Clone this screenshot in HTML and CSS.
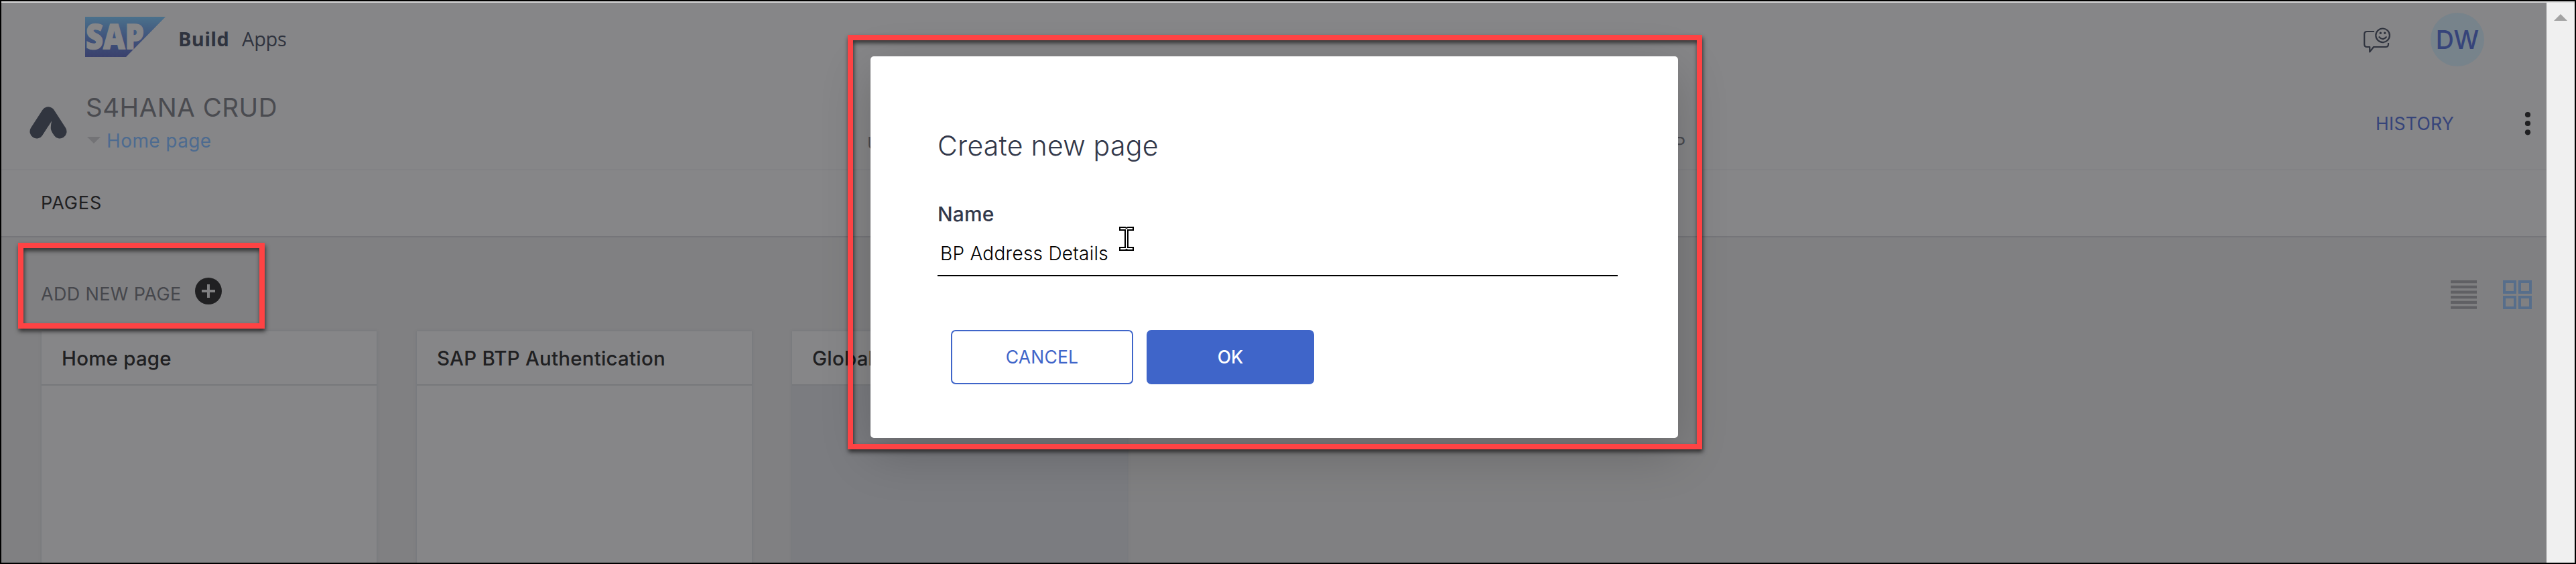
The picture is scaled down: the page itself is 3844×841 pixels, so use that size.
FILE: index.html
```
<!DOCTYPE html>
<html lang="en">
<head>
<meta charset="utf-8">
<title>SAP Build Apps</title>
<link rel="stylesheet" href="styles.css">
</head>
<body>
<div class="window">
  <div class="app">
    <header class="topbar">
      <svg class="logo" viewBox="0 0 120 60">
        <defs>
          <linearGradient id="sap" x1="0" y1="0" x2="0" y2="1">
            <stop offset="0" stop-color="#4b718c"/>
            <stop offset="0.5" stop-color="#40547c"/>
            <stop offset="1" stop-color="#3a416d"/>
          </linearGradient>
        </defs>
        <path d="M0 0H120L61 60H0Z" fill="url(#sap)"/>
        <text class="logo-text" x="1" y="48" textLength="87" lengthAdjust="spacingAndGlyphs">SAP</text>
      </svg>
      <span class="brand">Build</span>
      <span class="product">Apps</span>
      <div class="topbar-right">
        <svg class="feedback" viewBox="0 0 40 38">
          <g fill="none" stroke="#2f333e" stroke-width="2.2" stroke-linecap="round" stroke-linejoin="round">
            <path stroke-linecap="butt" d="M16 6H5Q1.2 6 1.2 10V25Q1.2 29 5 29H9.2V36.4L15 29H33Q37 29 37 25V23"/>
            <circle cx="28.6" cy="11.8" r="10.3"/>
            <path d="M23.4 14.2Q28.6 20 33.8 14.2"/>
          </g>
          <circle cx="25.3" cy="8.2" r="1.7" fill="#2f333e"/>
          <circle cx="31.7" cy="8.2" r="1.7" fill="#2f333e"/>
        </svg>
        <div class="avatar">DW</div>
      </div>
    </header>

    <div class="projectbar">
      <svg class="project-icon" viewBox="0 0 56 48">
        <g stroke="#31353f" stroke-width="20.6" stroke-linecap="round" stroke-linejoin="round" fill="none">
          <path d="M10.8 37.2L28 10.6L45.2 37.2"/>
        </g>
        <path d="M33.2 21.2Q31.2 29 32 34Q33 39 37 44L38 49H18L19.4 43Z" fill="#868688"/>
      </svg>
      <div class="project">
        <div class="project-name">S4HANA CRUD</div>
        <div class="project-page">
          <svg class="caret" viewBox="0 0 20 10"><path d="M0 0H20L10 10Z" fill="#737376"/></svg>
          <span>Home page</span>
        </div>
      </div>
      <nav class="tabs"><span>U</span><span>P</span></nav>
      <div class="history">HISTORY</div>
      <svg class="more" viewBox="0 0 10 36">
        <circle cx="5" cy="5" r="4.1"/><circle cx="5" cy="18" r="4.1"/><circle cx="5" cy="31.3" r="4.1"/>
      </svg>
    </div>

    <div class="section-title">PAGES</div>

    <main class="content">
      <div class="toolbar">
        <span class="add-label">ADD NEW PAGE</span>
        <svg class="plus" viewBox="0 0 40 40">
          <circle cx="20" cy="20" r="20" fill="#202022"/>
          <path d="M20 10V30M10 20H30" stroke="#808082" stroke-width="4"/>
        </svg>
        <svg class="list-icon" viewBox="0 0 39 43">
          <path d="M0 2.2H39M0 9.9H39M0 17.6H39M0 25.2H39M0 32.9H39M0 40.6H39" stroke="#606064" stroke-width="4.2"/>
        </svg>
        <svg class="grid-icon" viewBox="0 0 43 43">
          <g fill="none" stroke="#576e8b" stroke-width="4">
            <rect x="2" y="2" width="16" height="16"/><rect x="25" y="2" width="16" height="16"/>
            <rect x="2" y="25" width="16" height="16"/><rect x="25" y="25" width="16" height="16"/>
          </g>
        </svg>
      </div>
      <div class="cards">
        <article class="card"><h3 class="card-title">Home page</h3></article>
        <article class="card"><h3 class="card-title">SAP BTP Authentication</h3></article>
        <article class="card card-muted"><h3 class="card-title">Global</h3></article>
      </div>
    </main>
  </div>
  <div class="scrollbar">
    <svg class="scroll-up" viewBox="0 0 20 10"><path d="M0 10L10 0L20 10Z" fill="#a3a3a3"/></svg>
  </div>
</div>

<section class="modal">
  <h2 class="modal-title">Create new page</h2>
  <div class="field-label">Name</div>
  <div class="field">BP Address Details</div>
  <div class="actions">
    <div class="btn btn-outline">CANCEL</div>
    <div class="btn btn-primary">OK</div>
  </div>
</section>

<svg class="cursor" viewBox="0 0 22 36">
  <path d="M1 1H9L11 2.2L13 1H21V5H13V31H21V35H13L11 33.8L9 35H1V31H9V5H1Z" fill="#fff" stroke="#000" stroke-width="2"/>
</svg>
<div class="mark mark-add"></div>
<div class="mark mark-modal"></div>
</body>
</html>
```
FILE: styles.css
```
* { box-sizing: border-box; }

body {
  margin: 0;
  width: 3844px;
  height: 841px;
  position: relative;
  overflow: hidden;
  font-family: Inter, "Liberation Sans", sans-serif;
  background: #000;
}

.window {
  display: flex;
  height: 841px;
  border: 2px solid #000;
}

.app {
  flex: 1;
  display: flex;
  flex-direction: column;
  border-top: 2px solid #dcdcdc;
  background: #868688;
}

.scrollbar {
  width: 42px;
  border-top: 2px solid #dcdcdc;
  background: #f0f0f0;
  padding: 17px 11px;
}
.scroll-up { display: block; width: 20px; height: 10px; }

.topbar {
  display: flex;
  align-items: flex-start;
  height: 110px;
  padding: 21px 93px 0 125px;
  font: 29px/40px "Open Sans", sans-serif;
  color: #2f333e;
}
.logo { width: 120px; height: 60px; overflow: visible; }
.logo-text {
  font: 800 51px "Open Sans", sans-serif;
  fill: #868688;
  stroke: #868688;
  stroke-width: 1.5;
}
.brand { margin: 13px 0 0 19px; font-weight: 700; letter-spacing: 0.3px; }
.product { margin: 13px 0 0 19px; letter-spacing: -0.3px; }
.topbar-right { display: flex; margin: -6px 0 0 auto; }
.feedback { width: 40px; height: 38px; margin: 22px 60px 0 0; }
.avatar {
  width: 80px;
  height: 80px;
  border-radius: 50%;
  background: #77838b;
  color: #36447a;
  font: 500 37.5px/81px Inter, sans-serif;
  text-align: center;
}

.projectbar {
  display: flex;
  align-items: flex-start;
  height: 140px;
  padding: 22px 23px 0 42px;
  border-bottom: 2px solid #828285;
}
.project-icon { width: 56px; height: 48px; margin: 23px 28px 0 0; }
.project { width: 1166px; }
.project-name { font-size: 38.5px; line-height: 48px; letter-spacing: 0.5px; color: #4a4b50; }
.project-page {
  display: flex;
  align-items: center;
  gap: 9px;
  margin-top: 8px;
  padding-left: 2px;
  font-size: 28px;
  line-height: 36px;
  letter-spacing: 0.4px;
  color: #4d6b90;
}
.caret { width: 20px; height: 10px; margin-top: -2px; }
.tabs {
  display: flex;
  justify-content: space-between;
  width: 1221px;
  margin-top: 60px;
  font-size: 26px;
  line-height: 36px;
  color: #4a4b50;
}
.history {
  margin: 30px 0 0 auto;
  font-size: 26.5px;
  line-height: 36px;
  letter-spacing: 0.3px;
  color: #36447a;
}
.more { width: 10px; height: 36px; margin: 30px 0 0 105px; fill: #202022; }

.section-title {
  height: 100px;
  padding-left: 59px;
  border-bottom: 2px solid #757579;
  font-size: 27px;
  line-height: 98px;
  letter-spacing: 0.9px;
  color: #202022;
}

.content { flex: 1; background: #808082; overflow: hidden; }
.toolbar {
  display: flex;
  align-items: flex-start;
  height: 140px;
  padding: 60px 22px 0 59px;
}
.add-label {
  margin-top: 7px;
  font-size: 27px;
  line-height: 36px;
  letter-spacing: 0.35px;
  color: #46474c;
}
.plus { width: 40px; height: 40px; margin-left: 20px; }
.list-icon { width: 39px; height: 43px; margin: 4px 0 0 auto; }
.grid-icon { width: 43px; height: 43px; margin: 4px 0 0 39px; }

.cards { display: flex; gap: 60px; padding-left: 60px; }
.card {
  width: 500px;
  height: 400px;
  background: #868688;
  box-shadow: 0 0 4px rgba(90, 100, 110, 0.4);
}
.card-muted { background: #7b7c80; }
.card-title {
  margin: 0;
  height: 81px;
  padding-left: 30px;
  border-bottom: 2px solid #77787b;
  background: #868688;
  font-size: 29.5px;
  font-weight: 500;
  line-height: 81px;
  letter-spacing: 0.2px;
  color: #202022;
}

.modal {
  position: absolute;
  left: 1299px;
  top: 84px;
  width: 1205px;
  height: 569px;
  padding: 103px 90px 0 100px;
  border-radius: 5px;
  background: #fff;
  box-shadow: 0 22px 76px rgba(0, 0, 0, 0.2);
}
.modal-title {
  margin: 0;
  font-size: 41px;
  font-weight: 300;
  line-height: 60px;
  letter-spacing: 0.25px;
  color: #32384a;
}
.field-label {
  margin-top: 54px;
  font-size: 30px;
  font-weight: 500;
  line-height: 37px;
  letter-spacing: 0.1px;
  color: #32384a;
}
.field {
  height: 74px;
  padding: 22px 0 0 4px;
  border-bottom: 2px solid #000;
  font-size: 28px;
  font-weight: 300;
  line-height: 36px;
  letter-spacing: 0.25px;
  color: #000;
}
.actions { display: flex; gap: 20px; margin: 80px 0 0 20px; }
.btn {
  height: 81px;
  border-radius: 7px;
  font-size: 26.5px;
  line-height: 81px;
  text-align: center;
}
.btn-outline {
  width: 272px;
  border: 2px solid #3f65c9;
  line-height: 77px;
  letter-spacing: 0.2px;
  color: #3f65c9;
}
.btn-primary { width: 250px; background: #3f65c9; font-weight: 500; color: #fff; }

.cursor { position: absolute; left: 1670px; top: 338px; width: 22px; height: 36px; }

.mark {
  position: absolute;
  border: 8px solid #fe4344;
  filter: drop-shadow(1px 4px 3px rgba(0, 0, 0, 0.65));
}
.mark-add { left: 27px; top: 362px; width: 368px; height: 128px; }
.mark-modal { left: 1265px; top: 52px; width: 1275px; height: 618px; }
```
